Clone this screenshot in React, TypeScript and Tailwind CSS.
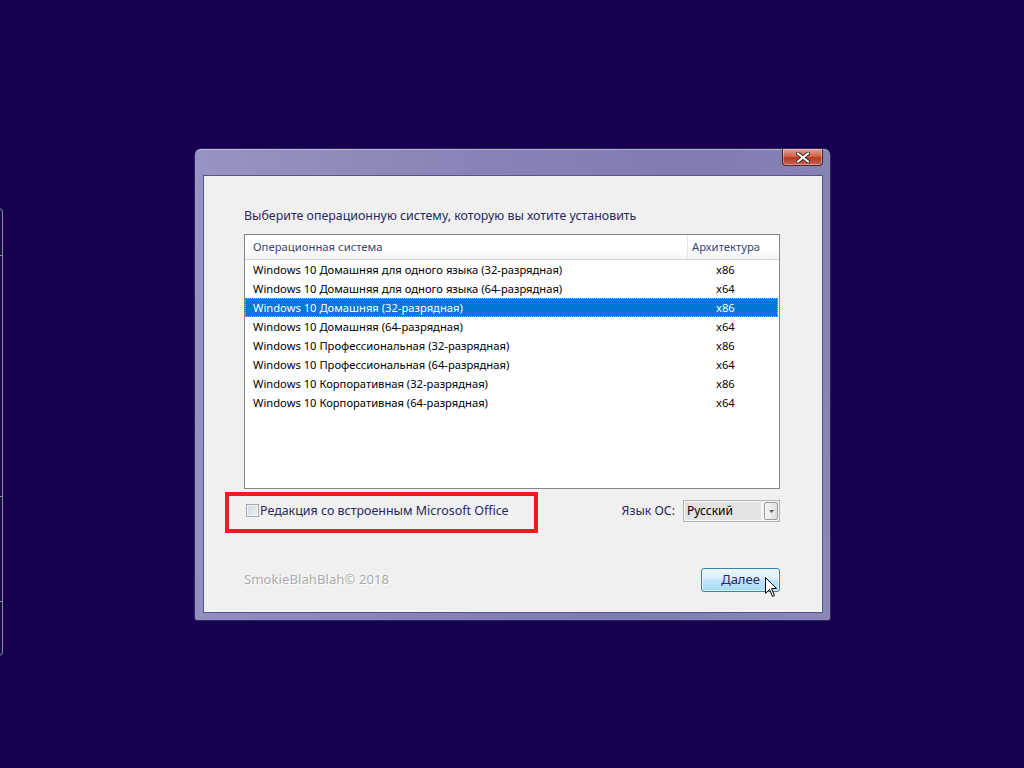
const rows = [
  { name: 'Windows 10 Домашняя для одного языка (32-разрядная)', arch: 'x86' },
  { name: 'Windows 10 Домашняя для одного языка (64-разрядная)', arch: 'x64' },
  { name: 'Windows 10 Домашняя (32-разрядная)', arch: 'x86' },
  { name: 'Windows 10 Домашняя (64-разрядная)', arch: 'x64' },
  { name: 'Windows 10 Профессиональная (32-разрядная)', arch: 'x86' },
  { name: 'Windows 10 Профессиональная (64-разрядная)', arch: 'x64' },
  { name: 'Windows 10 Корпоративная (32-разрядная)', arch: 'x86' },
  { name: 'Windows 10 Корпоративная (64-разрядная)', arch: 'x64' },
];

function CloseButton() {
  return (
    <div className="absolute right-[7px] top-0 flex h-[17px] w-[41px] items-center justify-center rounded-b-[4px] border border-t-0 border-[#4a2630] bg-[linear-gradient(#e3a08f,#d2644b_45%,#b83a22_55%,#c8634a)] shadow-[inset_0_0_0_1px_rgba(255,255,255,0.35)]">
      <svg width="14" height="11" viewBox="0 0 14 11">
        <path d="M2 1.5 L12 9.5 M12 1.5 L2 9.5" stroke="#3b2a2a" strokeWidth="4" strokeLinecap="round" />
        <path d="M2 1.5 L12 9.5 M12 1.5 L2 9.5" stroke="#ffffff" strokeWidth="2.2" strokeLinecap="round" />
      </svg>
    </div>
  );
}

function Cursor() {
  return (
    <svg className="absolute left-[63px] top-[8px]" width="13" height="21" viewBox="0 0 13 21">
      <path d="M0.5 0.5 L0.5 16.5 L4.5 12.5 L7.5 19.5 L9.5 18.5 L6.5 11.5 L11.5 11.5 Z" fill="#ffffff" stroke="#000000" strokeWidth="1" />
    </svg>
  );
}

export default function App() {
  return (
    <div className="relative h-[768px] w-[1024px] overflow-hidden bg-[#170050] font-['Noto_Sans',sans-serif]">
      {/* edge of another window on the left */}
      <div className="absolute left-[-10px] top-[208px] flex h-[448px] w-[13px] flex-col rounded-[4px] border border-[#8c8c9c] bg-[#1a0a4a]">
        <div className="mt-[46px] h-px bg-[#8c8c9c]" />
        <div className="mt-[240px] h-px bg-[#8c8c9c]" />
        <div className="mt-[104px] h-px bg-[#8c8c9c]" />
      </div>

      {/* setup window */}
      <div className="absolute left-[194px] top-[148px] flex h-[473px] w-[637px] flex-col rounded-t-[7px] rounded-b-[3px] border border-[#2c2660] bg-[linear-gradient(100deg,#9793c2,#8783b6_40%,#7f7cb0_70%,#8a87b8)] pb-[7px] pl-[8px] pr-[7px] pt-[26px] shadow-[inset_0_1px_0_rgba(255,255,255,0.35)]">
        <CloseButton />
        <div className="flex flex-1 flex-col border border-[#57548a] bg-[#f0f0f0] pl-[40px] pr-[42px] pt-[31px]">
          <div className="h-[18px] text-[12.4px] leading-[18px] text-[#2a2760]">
            Выберите операционную систему, которую вы хотите установить
          </div>

          {/* list view */}
          <div className="mt-[9px] flex h-[255px] flex-col border border-[#82878f] bg-white">
            <div className="flex h-[25px] border-b border-[#d5d5d5] bg-[linear-gradient(#ffffff,#ffffff_60%,#f3f4f6)] text-[11.3px] text-[#3a4470]">
              <div className="flex w-[442px] items-center pl-[8px]">Операционная система</div>
              <div className="flex flex-1 items-center border-l border-[#e3e5e8] pl-[4px]">Архитектура</div>
            </div>
            <div className="flex flex-col text-[11.2px] text-black">
              {rows.map((r, i) => (
                <div
                  key={r.name}
                  className={
                    i === 2
                      ? 'mr-px flex h-[19px] items-center border border-dotted border-[#f0b040] bg-[#0078d7] text-white'
                      : 'mr-px flex h-[19px] items-center border border-transparent'
                  }
                >
                  <div className="w-[442px] pl-[7px] leading-[17px]">{r.name}</div>
                  <div className="pl-[28px] leading-[17px]">{r.arch}</div>
                </div>
              ))}
            </div>
          </div>

          {/* options row */}
          <div className="mt-[11px] flex h-[22px] items-center justify-between">
            <div className="relative flex items-center pl-[2px]">
              <div className="absolute left-[-19px] top-[-10px] h-[41px] w-[313px] border-[4px] border-[#ed1c24]" />
              <div className="h-[13px] w-[13px] border border-[#a0a8b4] bg-[linear-gradient(135deg,#d4d8de,#eef0f3)] shadow-[inset_0_0_0_1px_#f4f4f4]" />
              <span className="ml-[1px] text-[12.45px] text-[#2a2760]">Редакция со встроенным Microsoft Office</span>
            </div>
            <div className="flex items-center gap-[8px]">
              <span className="text-[12.3px] text-[#2a2760]">Язык ОС:</span>
              <div className="flex h-[22px] w-[97px] items-center border border-[#b4b4b4] bg-[#f4f4f4] p-[1px]">
                <div className="flex h-full flex-1 items-center bg-[#e3e3e3] pl-[2px] text-[12px] text-black">Русский</div>
                <div className="ml-[3px] flex h-full w-[14px] items-center justify-center rounded-[2px] border border-[#9a9a9a] bg-[linear-gradient(90deg,#f6f6f6,#dedede)]">
                  <svg width="5" height="3" viewBox="0 0 5 3">
                    <path d="M0 0 L5 0 L2.5 3 Z" fill="#5a5a5a" />
                  </svg>
                </div>
              </div>
            </div>
          </div>

          {/* footer */}
          <div className="mt-[46px] flex h-[24px] items-center justify-between">
            <span className="text-[13.2px] text-[#ababab] [text-shadow:1px_1px_0_#ffffff]">SmokieBlahBlah© 2018</span>
            <div className="relative flex h-[24px] w-[79px] items-center justify-center rounded-[3px] border border-[#3c7fb1] bg-[linear-gradient(#eaf6fd,#d9f0fc_45%,#bee6fd_50%,#a7d9f5)] text-[13px] text-[#2a2760] shadow-[inset_0_0_0_1px_rgba(255,255,255,0.6)]">
              Далее
              <Cursor />
            </div>
          </div>
        </div>
      </div>
    </div>
  );
}
